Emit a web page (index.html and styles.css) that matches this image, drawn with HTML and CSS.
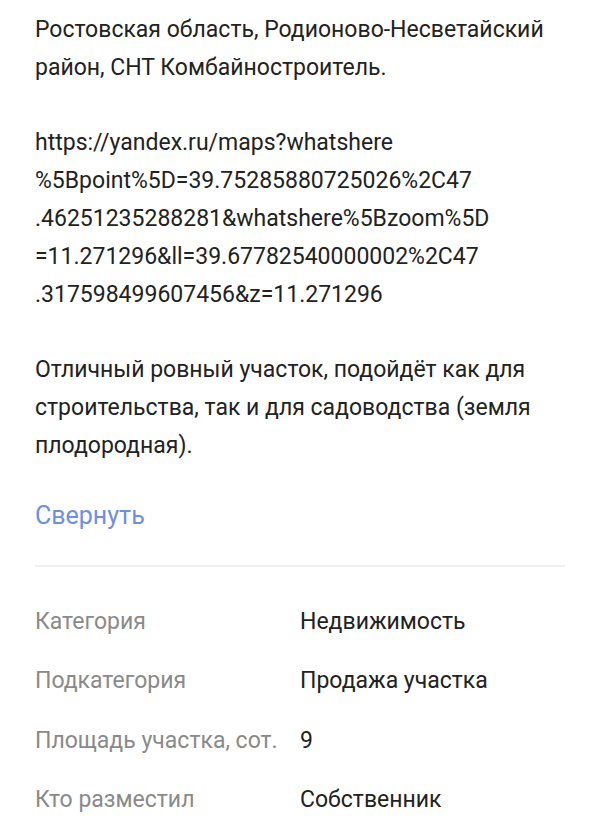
FILE: index.html
```html
<!DOCTYPE html>
<html lang="ru">
<head>
    <meta charset="UTF-8">
    <meta name="viewport" content="width=device-width, initial-scale=1.0">
    <title>Объявление</title>
    <link rel="stylesheet" href="styles.css">
</head>
<body>
    <div class="ad">
        <p class="description">
            Ростовская область, Родионово-Несветайский<br>
            район, СНТ Комбайностроитель.<br>
            <br>
            https://yandex.ru/maps?whatshere<br>
            %5Bpoint%5D=39.75285880725026%2C47<br>
            .46251235288281&amp;whatshere%5Bzoom%5D<br>
            =11.271296&amp;ll=39.67782540000002%2C47<br>
            .317598499607456&amp;z=11.271296<br>
            <br>
            Отличный ровный участок, подойдёт как для<br>
            строительства, так и для садоводства (земля<br>
            плодородная).
        </p>
        <a class="collapse-link" href="#">Свернуть</a>
        <div class="divider"></div>
        <div class="params">
            <div class="param-row">
                <span class="param-label">Категория</span>
                <span class="param-value">Недвижимость</span>
            </div>
            <div class="param-row">
                <span class="param-label">Подкатегория</span>
                <span class="param-value">Продажа участка</span>
            </div>
            <div class="param-row">
                <span class="param-label">Площадь участка, сот.</span>
                <span class="param-value">9</span>
            </div>
            <div class="param-row">
                <span class="param-label">Кто разместил</span>
                <span class="param-value">Собственник</span>
            </div>
        </div>
    </div>
</body>
</html>
```

FILE: styles.css
```css
body {
    margin: 0;
    background-color: #fff;
    font-family: Roboto, "Noto Sans", Arial, sans-serif;
    color: #222;
}
.ad {
    padding: 11px 35px 0 35px;
}
.description {
    margin: 0;
    font-size: 23px;
    line-height: 37.8px;
    white-space: nowrap;
}
.collapse-link {
    display: block;
    margin-top: 36px;
    font-size: 25px;
    line-height: 30px;
    color: #6e8fe4;
    text-decoration: none;
}
.divider {
    height: 2px;
    margin-top: 34px;
    background-color: #efefef;
}
.params {
    padding-top: 25px;
}
.param-row {
    display: flex;
    height: 59.5px;
    align-items: center;
    font-size: 23px;
}
.param-label {
    width: 265px;
    color: #8a8a8a;
}
.param-value {
    color: #222;
}
```
